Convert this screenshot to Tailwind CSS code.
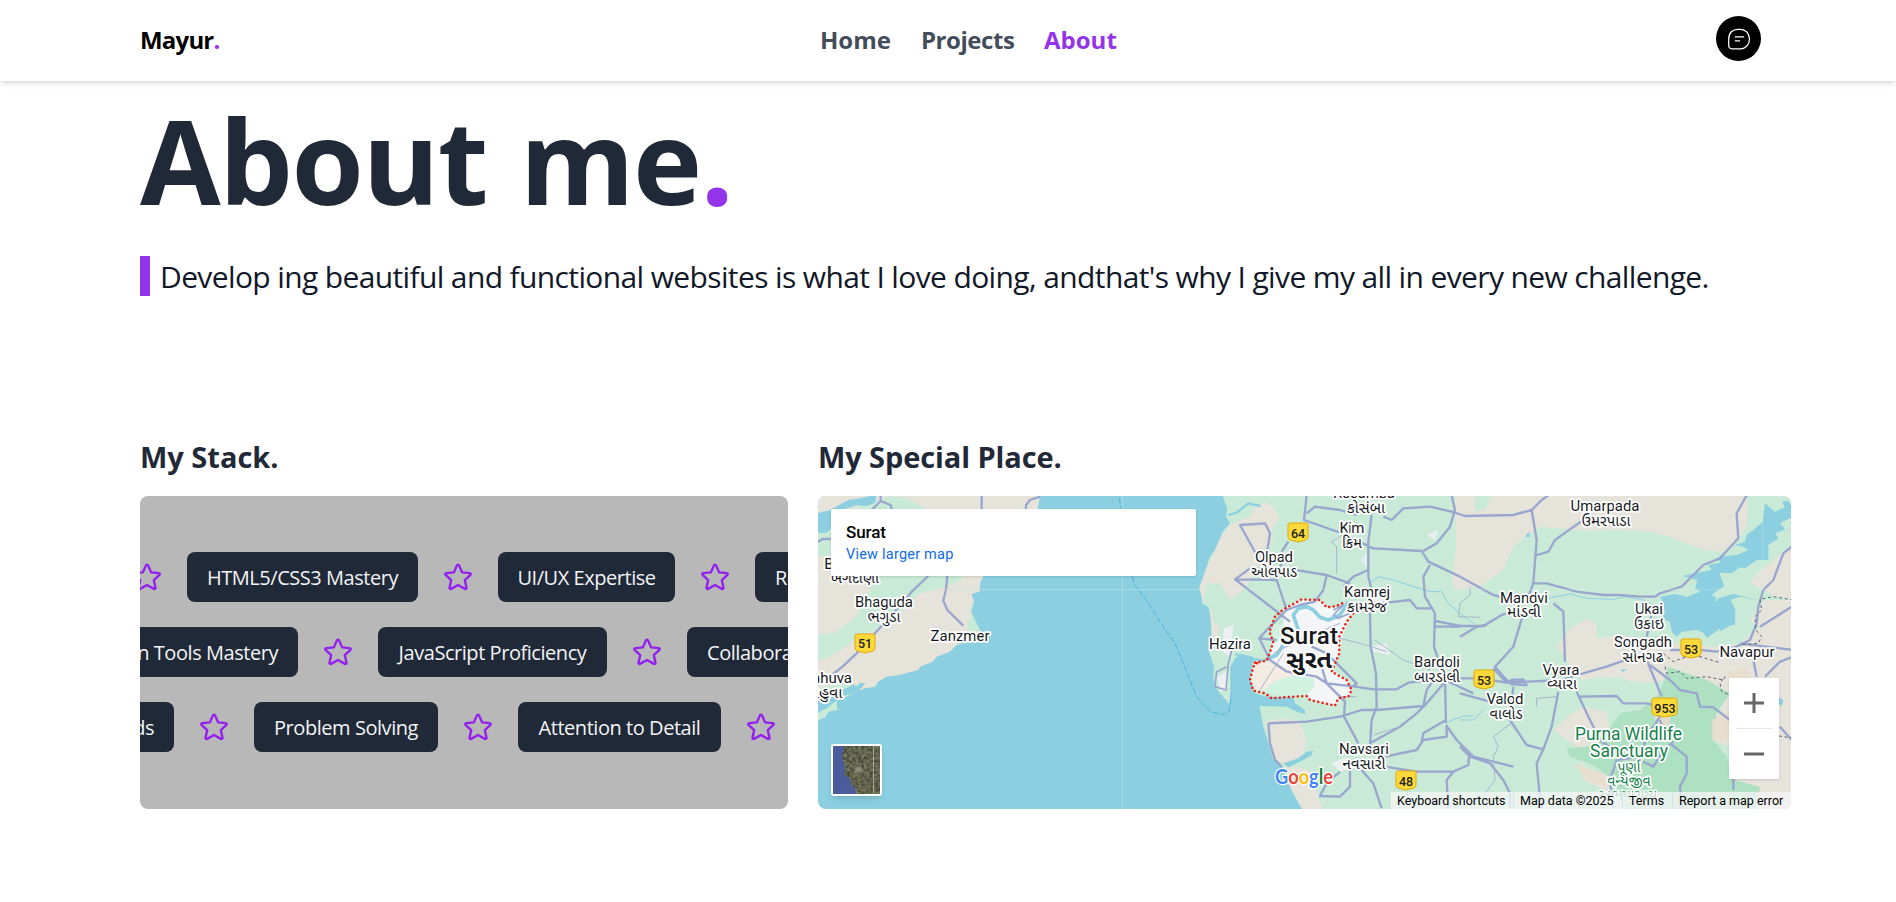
<!DOCTYPE html>
<html lang="en">
<head>
<meta charset="utf-8">
<title>Mayur. | About</title>
<script src="https://cdn.jsdelivr.net/npm/@tailwindcss/browser@4"></script>
</head>
<body class="h-[902px] overflow-hidden bg-white font-['Segoe_UI','Open_Sans',sans-serif] text-[#1f2937]">
<svg class="hidden">
  <symbol id="star" viewBox="0 0 32 32"><path d="M16 3.600c.5 0 .9.3 1.100.8l3 7 7.600.7c1 .1 1.400 1.100.700 1.800l-5.600 5.200 1.700 7.600c.2.900-.8 1.600-1.600 1.200L16 24l-6.900 3.900c-.8.4-1.800-.3-1.600-1.200l1.700-7.600-5.600-5.200c-.7-.7-.3-1.700.7-1.800l7.600-.7 3-7c.2-.5.6-.8 1.100-.8z" fill="none" stroke="#9320ee" stroke-width="2.400" stroke-linejoin="round"/></symbol>
</svg>

<header class="relative flex h-[81px] items-center bg-white px-[140px] shadow-md">
  <a class="-mt-[2px] w-[680px] text-2xl leading-8 font-bold tracking-[-0.8px] text-black">Mayur<span class="text-[#9333ea]">.</span></a>
  <nav class="-mt-[2px] flex w-[896px] gap-[30px] text-2xl leading-8 font-bold text-[#434d5a]">
    <a class="w-[71px] whitespace-nowrap">Home</a>
    <a class="w-[93px] tracking-[-0.45px] whitespace-nowrap">Projects</a>
    <a class="whitespace-nowrap text-[#9333ea]">About</a>
  </nav>
  <button class="-mt-1 -mr-[5px] flex size-[45px] shrink-0 items-center justify-center rounded-full bg-black">
    <svg class="size-6" viewBox="0 0 24 24" fill="none" stroke="#fff" stroke-width="1.25" stroke-linecap="round"><path d="M1.700 12.500C1.700 5.500 5.500 2.300 11 2.300h2.500c5 0 9 4.200 9 9.800s-4 9.700-9 9.700H5c-2.200 0-3.300-1.200-3.300-3.300zM8.200 9.800h8.400M8.200 13.800h4.400"/></svg>
  </button>
</header>

<main class="px-[140px]">
  <h1 class="mt-[5px] h-[151px] text-[117px] leading-[147px] font-bold tracking-[-1.6px] whitespace-nowrap [word-spacing:4px]">About me<span class="text-[#9333ea]">.</span></h1>
  <p class="mt-[19px] h-10 border-l-[10px] border-[#9333ea] pl-[10px] text-[30px] leading-[42px] tracking-[-0.627px] whitespace-nowrap text-[#111827]">Develop ing beautiful and functional websites is what I love doing, andthat's why I give my all in every new challenge.</p>

  <div class="mt-[140px] flex gap-[30px]">
    <section class="w-[648px] shrink-0">
      <h2 class="h-[60px] text-[29px] leading-[42px] font-bold">My Stack.</h2>
      <div class="flex h-[313px] flex-col justify-center gap-[25px] overflow-hidden rounded-lg bg-[#b8b8b8] pb-[2px] text-xl tracking-[-0.45px] whitespace-nowrap text-gray-100">
        <div class="-ml-[9px] flex items-center gap-6">
          <svg class="size-8 shrink-0"><use href="#star"/></svg>
          <span class="flex h-[50px] w-[231px] shrink-0 items-center justify-center rounded-lg bg-[#1f2937] pt-[2px]">HTML5/CSS3 Mastery</span>
          <svg class="size-8 shrink-0"><use href="#star"/></svg>
          <span class="flex h-[50px] w-[177px] shrink-0 items-center justify-center rounded-lg bg-[#1f2937] pt-[2px]">UI/UX Expertise</span>
          <svg class="size-8 shrink-0"><use href="#star"/></svg>
          <span class="flex h-[50px] w-[240px] shrink-0 items-center rounded-lg bg-[#1f2937] pt-[2px] pl-5">Responsive Design</span>
        </div>
        <div class="-ml-[90px] flex items-center gap-6">
          <span class="flex h-[50px] w-[248px] shrink-0 items-center justify-end rounded-lg bg-[#1f2937] pt-[2px] pr-5">Design Tools Mastery</span>
          <svg class="size-8 shrink-0"><use href="#star"/></svg>
          <span class="flex h-[50px] w-[229px] shrink-0 items-center justify-center rounded-lg bg-[#1f2937] pt-[2px]">JavaScript Proficiency</span>
          <svg class="size-8 shrink-0"><use href="#star"/></svg>
          <span class="flex h-[50px] w-[200px] shrink-0 items-center rounded-lg bg-[#1f2937] pt-[2px] pl-5">Collaboration</span>
        </div>
        <div class="-ml-[166px] flex items-center gap-6">
          <span class="flex h-[50px] w-[200px] shrink-0 items-center justify-end rounded-lg bg-[#1f2937] pt-[2px] pr-5">Web Standards</span>
          <svg class="size-8 shrink-0"><use href="#star"/></svg>
          <span class="flex h-[50px] w-[184px] shrink-0 items-center justify-center rounded-lg bg-[#1f2937] pt-[2px]">Problem Solving</span>
          <svg class="size-8 shrink-0"><use href="#star"/></svg>
          <span class="flex h-[50px] w-[203px] shrink-0 items-center justify-center rounded-lg bg-[#1f2937] pt-[2px]">Attention to Detail</span>
          <svg class="size-8 shrink-0"><use href="#star"/></svg>
        </div>
      </div>
    </section>

    <section class="w-[973px] shrink-0">
      <h2 class="h-[60px] text-[29px] leading-[42px] font-bold tracking-[-0.1px]">My Special Place.</h2>
      <div class="relative h-[313px] overflow-hidden rounded-lg bg-[#8bcfe0] font-['Roboto',sans-serif]">
        <svg class="block h-[313px] w-[973px]" viewBox="0 0 973 313" stroke-linejoin="round">
          <!-- western shore -->
          <g transform="translate(-8 -66) scale(.33333)">
            <path fill="#e6e3db" d="M20 190H692L683 237L600 400L520 438L512 455L508 485L485 492L492 515L480 540L495 570L512 605L500 625L440 645L420 665L380 680L368 695L330 710L325 720L265 736L228 740L205 755L195 770L165 775L130 790L80 812V838L55 845L45 862L20 872Z"/>
            <path fill="#c8ead7" d="M20 612L70 610L110 582L138 560L160 510L190 465L215 430H470L440 458L380 478L330 490L290 530L230 575L190 602L130 630L90 662L55 680L20 695ZM20 355L24 310L110 240L245 198L290 205L350 237V340L20 380ZM492 515L480 540L495 570L512 605L470 600L480 560ZM20 775L90 760L160 770L130 790L80 812V838L95 838L55 845L45 862L20 872Z"/>
            <path fill="#8bcfe0" d="M20 250L60 240L115 210L150 205L190 196H200L195 218L170 228L140 226L105 237H80V280L50 308H20ZM20 785L60 790L110 775L130 762L140 770L150 758L165 760L145 785L100 798L75 815L50 835L20 850Z"/>
            <g fill="none" stroke="#99a6cd" stroke-width="7"><path d="M24 335L38 327H70M212 196V213L185 240M212 213L242 225L246 240M515 196V240M690 200L660 210L648 225V240M355 438L305 485L285 510L240 560L195 610L140 670L95 712L65 735M412 436L408 478L400 512L412 540L460 587"/></g>
            <path fill="none" stroke="#bfe3ea" stroke-width="2" d="M400 479H1300M937 196V1140"/>
            <path fill="none" stroke="#4ab4d4" stroke-width="3" stroke-dasharray="18 6" d="M928 205L933 235M967 440L972 462L1010 512L1060 590L1095 640L1120 700L1160 800L1200 845L1240 854L1257 845L1262 815V700"/>
          </g>
          <!-- eastern land mass -->
          <g transform="translate(322 -16) scale(.33333)">
            <path fill="#c8ead7" d="M245 40L262 85L258 110L270 128L245 160L230 205L210 230L195 275L178 325L195 345L185 370L205 380L215 425L215 460L228 490L205 510L212 530L222 560L220 590L225 620L240 640L268 672L272 640V560L285 535L305 522L340 530L345 560L330 600L340 640L380 655L358 675L370 740L385 790L400 840L430 860L445 910L465 950L488 990H1960V40Z"/>
            <g fill="#e6e3db">
              <path d="M238 180L265 140L300 120L330 110L350 75L375 68L400 80L418 115L395 145L400 190L370 210L350 270L310 330L270 360L240 310L200 310L190 370L178 325L195 275Z"/>
              <path d="M210 380L225 430L240 440L230 490L215 470Z"/>
              <path d="M375 725L430 715L480 722L500 785L485 840L440 850L400 840ZM470 860L510 870L535 950L550 990H488L445 910L430 860Z"/>
              <path d="M945 40H1810L1850 80L1815 150L1790 185L1740 215L1690 210L1590 170L1530 155L1440 150L1330 152L1200 140L1160 165L1120 200L1090 270L1020 320L945 330L935 300L948 200Z"/>
              <path d="M1960 190L1900 240L1850 280L1830 310L1870 330L1905 350L1960 360Z"/>
              <path d="M1250 500L1290 445L1340 418L1370 430L1370 475L1430 465L1500 472L1560 490L1720 500L1800 490L1860 440L1830 420L1870 360L1960 360V990H1850L1830 940L1770 880V800L1715 780L1720 720L1760 640L1640 590L1530 610L1370 590L1330 605L1285 550Z"/>
              <path d="M1240 750L1290 705L1330 680L1400 695L1410 760L1360 815L1320 870L1420 890L1400 935L1330 900L1320 810Z"/>
            </g>
            <path fill="#c8ead7" d="M1820 40H1960V190L1900 240L1850 280L1830 310L1790 340L1780 200L1815 150L1825 100ZM1005 48H1050L1040 85L1005 95ZM1310 600L1440 590L1500 620L1525 660L1500 700L1430 690L1350 660Z"/>
            <path fill="#aee0c2" d="M1440 700L1500 690L1560 640L1585 560L1640 580L1700 600L1770 640L1730 700L1720 780L1760 830L1780 900L1860 920L1850 990H1460L1420 900L1360 855L1290 830L1280 805L1340 800L1400 760Z"/>
            <path fill="#e8ddce" opacity=".85" d="M1760 580L1820 560L1830 600L1770 640ZM1715 720L1770 700V780L1715 780ZM1540 710L1590 700V735L1560 740ZM1300 850L1390 880L1400 920L1340 900Z"/>
            <g fill="#8bcfe0">
              <path d="M1960 88L1945 62L1925 65L1935 82L1905 95L1875 70L1868 125L1840 150L1820 165L1815 185L1785 195L1810 200L1825 210L1790 225L1735 230L1740 248L1705 255L1715 270L1665 280L1628 288L1672 300L1665 325L1680 335L1640 350L1605 342L1560 350L1570 370L1575 400L1560 415L1590 425L1595 455L1610 470L1625 455L1670 450L1690 458L1700 475L1740 445L1738 455L1775 435L1785 435L1786 390L1772 360L1800 350L1860 362L1780 342L1735 355L1725 368L1728 352L1715 345L1752 318L1742 290L1738 278L1775 280L1800 262L1815 265L1850 240H1885V195L1915 175L1905 160L1935 148L1920 130L1960 110Z"/>
              <path d="M1155 170L1167 155L1170 172ZM1440 570L1460 566L1450 576ZM1915 650L1930 660L1925 680L1915 670Z"/>
              <path d="M335 560L350 600L335 630L345 640L380 650L460 652L465 670L495 690V702L470 695L440 680L358 678L330 650L330 590Z"/>
              <path d="M430 850L475 835L500 815L520 812L515 825L490 840L445 862Z"/>
            </g>
            <path fill="#f3f5f7" d="M430 385L490 355L545 362L570 385L625 370L635 405L610 460L598 520L580 570L630 610L635 640L580 680L510 660L480 600L420 595L390 540L400 460L430 430Z"/>
            <path fill="#f4ece3" d="M340 545L390 540L445 570L480 600L400 620L350 635L330 600Z"/>
            <path fill="#d2f2e0" d="M370 635L400 605L460 585L520 595L525 620L500 645L430 650ZM400 430L450 440L440 480L395 490Z"/>
            <g fill="#eceff2"><path d="M250 445L280 435L272 530L252 520ZM575 850L620 830L640 860L600 875ZM690 350H740L750 375L700 385ZM690 500L740 490L750 525L700 515ZM230 590L265 570L262 625L240 635ZM860 165L895 150L885 180ZM665 240L680 220V260Z"/></g>
            <g fill="none" stroke="#8bcfe0" stroke-width="11"><path d="M475 450L460 405L475 385L500 380L520 390L540 412L565 420L600 405L625 365M375 540L410 525L430 495"/><path stroke-width="7" d="M285 522L330 535L370 542M265 105L290 98L325 70L362 78"/><path stroke-width="3" d="M690 310L715 290L760 300L820 320L870 335L905 335L925 370L960 400L1000 430M1222 355L1290 342L1340 355L1420 358L1455 350L1510 360L1550 380M960 720H1000L1035 685M925 725L970 708H1000"/></g>
            <!-- main roads -->
            <g fill="none" stroke="#99a6cd" stroke-width="7">
              <path d="M500 46L492 120L600 158L700 205L845 213L865 245L960 290L1060 345L1110 358M500 100L525 80L600 90L650 105M350 225L300 135L375 130L390 160L382 210M445 185L425 215M440 390L410 300M430 230L410 300L285 298L330 265L480 272L560 285L630 310M285 298L450 425M560 285L550 330L525 365M695 105L685 185V290L695 330L690 400L692 500L708 580L710 680L695 720L690 800M685 270L640 290L610 320M730 110L755 120L790 85L870 80L935 95L975 108L1120 105L1175 90L1205 60L1225 46M935 46L945 90L930 140L890 190L850 213M870 255L850 290L855 350L885 400L882 500L915 600L918 730M620 370H720L810 360L830 385L880 385M882 422L960 438H1030L1085 405L1130 390M960 470L1010 440M1175 90L1190 180L1180 310L1165 350M1182 228L1225 215L1245 180L1280 155L1330 120M1175 310H1220L1310 335L1390 345H1440L1500 350H1545L1560 340L1625 320L1690 255L1740 235L1795 175L1790 100L1820 46M1240 370L1270 395L1275 545M1150 400L1120 500L1065 560L1100 600L1115 610M440 390L380 450L358 475L390 540L440 575L530 590L560 610L645 620L700 628H770L805 608L880 600M358 475L410 480M440 390L480 375L525 365M960 440H880M515 500L560 520L650 610L640 620M540 545L560 610L615 665L612 710L655 790M385 730L500 725L600 710L665 690L710 690L850 678L860 630L880 600M385 730L390 790L405 840L425 860M690 790L780 740L830 700L860 670L920 600M915 600L1000 640M735 830L830 810L850 780L920 770V735M918 720L850 760L845 785M918 735L950 780L1000 830L1120 860M735 860L830 875L940 875L985 855L988 820M630 865V920L600 950L540 948L560 910L600 875M660 865L700 910L725 985M940 875L920 900L925 985"/>
              <path d="M960 595H1020L1100 608L1165 605L1260 600L1400 560L1470 535M1100 608L1060 565M1095 610L1115 600L1150 598L1160 615L1110 612M1120 620L1110 720L1160 795L1210 808L1235 740L1255 635M1210 808L1190 850L1198 935L1205 985M960 640L1050 665M960 800L990 830L1050 850L1090 900L1110 940V985M1010 440L1040 435M1310 635L1350 720L1380 780L1420 810M1320 650L1430 648L1450 670H1520L1560 680M1520 540L1545 600L1565 650M1530 555L1590 600L1620 630L1670 640L1680 680L1720 682L1770 720H1820M1590 510H1620M1680 510L1730 515L1790 500L1830 480L1850 430L1855 380L1870 330L1900 300L1930 220L1955 200M1800 490L1960 510M1860 440L1955 380M1840 540L1850 590M1875 590L1920 545L1960 530M1560 710L1520 770L1500 830L1430 840L1410 900L1420 985M1560 720L1570 750M1590 790L1640 830V880L1620 920L1625 985M1500 840L1540 860L1570 810L1600 785M1780 895V930M1920 740L1955 780M1520 470L1535 400"/>
              <path stroke-width="5" d="M230 575L225 620L258 630L265 550L275 510M230 575L260 560M580 390L610 375L580 405L595 415L640 395"/>
            </g>
            <g fill="none" stroke="#a9b4cc" stroke-width="3"><path d="M590 280V200L575 185L620 158M705 480L790 540L870 570M600 475L660 490L740 515M990 320V345L960 370L955 410L1020 412M430 520L360 630M400 520L500 470L600 430M1190 680L1190 655L1250 650M1120 725L1060 770L1075 800L1060 830L1065 900L1035 940M700 765L780 740M600 650H650"/></g>
            <path fill="none" stroke="#5a6472" stroke-width="3" stroke-dasharray="9 8" d="M1960 360L1900 350L1860 358L1865 390L1845 410L1848 450L1865 470L1855 490L1800 495M1570 520L1600 545L1640 530L1680 530L1740 548M1575 560L1580 580L1620 575L1640 595L1700 590L1750 600L1755 590L1740 610L1745 635L1770 645M1900 765L1960 775"/>
            <path fill="none" stroke="#ea2517" stroke-width="7.500" stroke-linecap="round" stroke-dasharray=".5 13" d="M345 548L380 542L392 510L400 485L388 455L405 410L430 388L460 372L485 358L540 360L560 382L590 378L610 368M640 400L620 425L598 470L598 520L575 575L620 600L635 630L625 650L595 655L585 677L510 660L500 648L460 650L395 655L375 640L340 632L330 600L340 560L355 546"/>
            <path fill="none" stroke="#dff1e9" stroke-width="2" opacity=".5" d="M300 328H560M960 328H1900M1868 48V300"/>
          </g>
          <!-- place labels -->
          <g font-family="Roboto, 'Noto Sans Gujarati', 'Noto Sans', sans-serif" font-size="15" text-anchor="middle" fill="#15191d" stroke="#fff" stroke-width="3.500" paint-order="stroke">
            <text x="11" y="73">B</text><text x="37" y="87" textLength="48" lengthAdjust="spacingAndGlyphs">બગદાણા</text>
            <text x="66" y="111" textLength="58">Bhaguda</text><text x="66" y="126" textLength="33" lengthAdjust="spacingAndGlyphs">ભગુડા</text>
            <text x="142" y="145" textLength="59">Zanzmer</text>
            <text x="14" y="187">ahuva</text><text x="8" y="202" textLength="33" lengthAdjust="spacingAndGlyphs">મહુવા</text>
            <text x="546" y="2" textLength="62">Kosamba</text><text x="548" y="17" textLength="38" lengthAdjust="spacingAndGlyphs">કોસંબા</text>
            <text x="534" y="37" textLength="25">Kim</text><text x="534" y="52" textLength="20" lengthAdjust="spacingAndGlyphs">કિમ</text>
            <text x="456" y="66" textLength="38">Olpad</text><text x="456" y="81" textLength="46" lengthAdjust="spacingAndGlyphs">ઓલપાડ</text>
            <text x="549" y="101" textLength="46">Kamrej</text><text x="549" y="116" textLength="40" lengthAdjust="spacingAndGlyphs">કામરેજ</text>
            <text x="412" y="153" textLength="42">Hazira</text>
            <text x="619" y="171" textLength="46">Bardoli</text><text x="619" y="186" textLength="46" lengthAdjust="spacingAndGlyphs">બારડોલી</text>
            <text x="546" y="258" textLength="50">Navsari</text><text x="546" y="273" textLength="43" lengthAdjust="spacingAndGlyphs">નવસારી</text>
            <text x="787" y="15" textLength="69">Umarpada</text><text x="788" y="30" textLength="49" lengthAdjust="spacingAndGlyphs">ઉમરપાડા</text>
            <text x="706" y="107" textLength="48">Mandvi</text><text x="706" y="121" textLength="34" lengthAdjust="spacingAndGlyphs">માંડવી</text>
            <text x="831" y="118" textLength="28">Ukai</text><text x="831" y="133" textLength="30" lengthAdjust="spacingAndGlyphs">ઉકાઇ</text>
            <text x="825" y="151" textLength="58">Songadh</text><text x="825" y="166" textLength="41" lengthAdjust="spacingAndGlyphs">સોનગઢ</text>
            <text x="929" y="161" textLength="55">Navapur</text>
            <text x="743" y="179" textLength="37">Vyara</text><text x="744" y="193" textLength="30" lengthAdjust="spacingAndGlyphs">વ્યારા</text>
            <text x="687" y="208" textLength="37">Valod</text><text x="688" y="223" textLength="33" lengthAdjust="spacingAndGlyphs">વાલોડ</text>
            <g font-size="24" font-weight="500"><text x="491" y="147.500" textLength="58">Surat</text><text x="491" y="172" font-weight="700" textLength="46" lengthAdjust="spacingAndGlyphs">સુરત</text></g>
            <g fill="#14804a" font-size="17.500"><text x="810.500" y="244" textLength="107">Purna Wildlife</text><text x="811" y="261" textLength="78">Sanctuary</text>
            <text x="811" y="276" font-size="14">પૂર્ણા</text><text x="811" y="290" font-size="14">વન્યજીવ</text><text x="810" y="304" font-size="14" opacity=".7">અભયારણ્ય</text></g>
          </g>
          <!-- highway shields -->
          <g font-family="Roboto, sans-serif" font-size="12.500" font-weight="500" text-anchor="middle">
            <g fill="#fdda3a" stroke="#e3a908" stroke-width="1">
              <path id="shield" d="M39 138h16q2 0 2 2v12q0 2-2 3l-8 2-8-2q-2-1-2-3v-12q0-2 2-2z"/>
              <use href="#shield" x="433" y="-111"/><use href="#shield" x="619" y="36"/><use href="#shield" x="826" y="5"/><use href="#shield" x="541" y="137"/>
              <path d="M836 202h21q2 0 2 2v12q0 2-2 3l-10.500 2-10.500-2q-2-1-2-3v-12q0-2 2-2z"/>
            </g>
            <g fill="#202124"><text x="47" y="151.500">51</text><text x="480" y="41.500">64</text><text x="666" y="188.500">53</text><text x="873" y="157.500">53</text><text x="588" y="289.500">48</text><text x="847" y="216.500">953</text></g>
          </g>
        </svg>

        <div class="absolute top-[13px] left-[13px] h-[67px] w-[365px] rounded-[2px] bg-white pt-[13px] pl-[15px] shadow">
          <div class="text-[17px] leading-5 font-medium tracking-[-0.1px] text-black">Surat</div>
          <a class="block text-[14.5px] leading-[25px] tracking-[0.22px] text-[#0f6bea]">View larger map</a>
        </div>
        <div class="absolute top-[248px] left-[13px] h-[52px] w-[51px] overflow-hidden rounded-[3px] border-2 border-white shadow-md">
          <svg class="size-full" viewBox="0 0 47 48" preserveAspectRatio="none">
            <defs><filter id="terrain" x="0" y="0" width="100%" height="100%" color-interpolation-filters="sRGB"><feTurbulence type="fractalNoise" baseFrequency=".35" numOctaves="3" seed="4"/><feColorMatrix values=".45 0 0 0 .15  .45 0 0 0 .16  .35 0 0 0 .12  0 0 0 0 1"/></filter></defs>
            <path fill="#5a5e49" d="M0 0h47v48H0z"/><path filter="url(#terrain)" d="M0 0h47v48H0z"/>
            <path fill="#4a5c9c" d="M0 0H11L9 12L12 20L11 29L17 32L18 39L22 42L23 48H0z"/><path fill="#a5a69e" opacity=".5" d="M21 23l5-3 4 2-2 4-6 2z"/><path stroke="#a0a193" stroke-width="1" d="M40.500 0v48"/>
          </svg>
        </div>
        <div class="absolute top-[271px] left-[456px]">
          <svg class="h-[26px] w-[62px] overflow-visible" viewBox="0 0 62 26"><g font-family="Lato, sans-serif" font-weight="700" font-size="20" stroke="#fff" stroke-width="2.500" paint-order="stroke"><text y="16.500" x="1" textLength="58" lengthAdjust="spacingAndGlyphs"><tspan fill="#4285f4">G</tspan><tspan fill="#ea4335">o</tspan><tspan fill="#fbbc04">o</tspan><tspan fill="#4285f4">g</tspan><tspan fill="#188038">l</tspan><tspan fill="#ea4335">e</tspan></text></g></svg>
        </div>
        <div class="absolute top-[182px] left-[911px] flex h-[101px] w-[50px] flex-col items-center bg-white shadow">
          <svg class="h-[50px] w-5" viewBox="0 0 20 50" stroke="#666" stroke-width="3"><path d="M0 25H20M10 15V35"/></svg>
          <div class="h-px w-[37px] bg-[#e6e6e6]"></div>
          <svg class="h-[50px] w-5" viewBox="0 0 20 50" stroke="#666" stroke-width="3"><path d="M0 25H20"/></svg>
        </div>
        <div class="absolute right-0 bottom-0 flex h-[17px] w-[400px] bg-[#f5f5f5]/75 text-[12.5px] leading-[17px] whitespace-nowrap text-black">
          <span class="w-[122px] pl-[6px]">Keyboard shortcuts</span>
          <span class="w-[109px] border-l border-[#d5e4dc] pl-[6px]">Map data ©2025</span>
          <span class="w-[50px] border-l border-[#d5e4dc] pl-[6px]">Terms</span>
          <span class="border-l border-[#d5e4dc] pl-[6px]">Report a map error</span>
        </div>
      </div>
    </section>
  </div>
</main>
</body>
</html>
